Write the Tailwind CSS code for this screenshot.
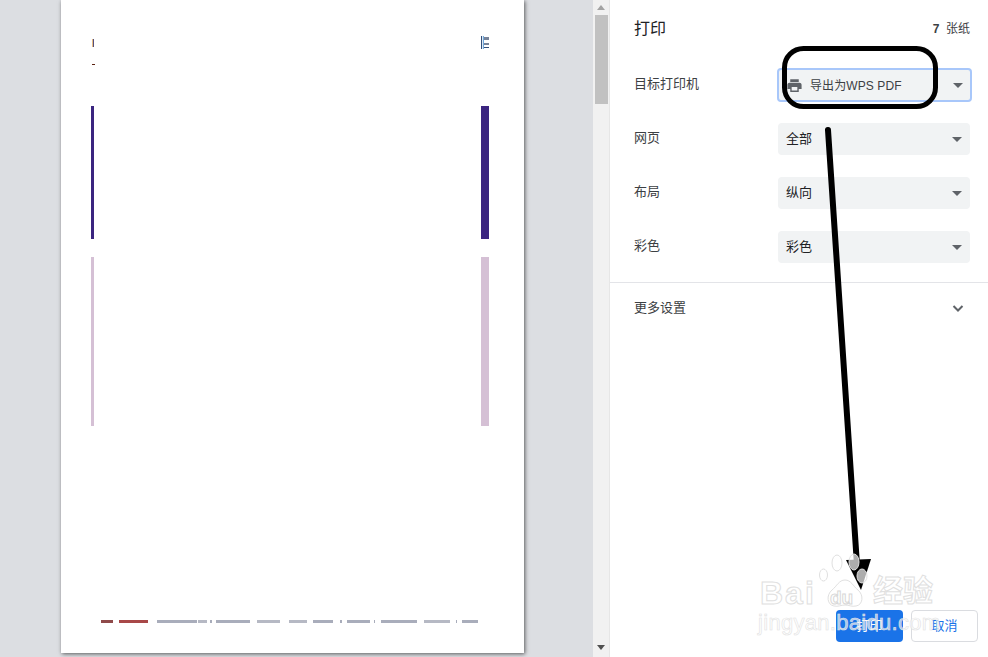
<!DOCTYPE html>
<html lang="zh-CN">
<head>
    <meta charset="UTF-8">
    <title>打印</title>
    <script src="https://cdn.jsdelivr.net/npm/@tailwindcss/browser@4"></script>
</head>
<body class="overflow-hidden bg-white font-['Liberation_Sans','Noto_Sans_CJK_SC',sans-serif]">
    <div class="relative flex h-[657px] w-[988px] overflow-hidden">
        <!-- Preview area -->
        <div class="h-full w-[593px] shrink-0 bg-[#dcdee2] pl-[61px]">
            <div class="flex h-[653px] w-[463px] flex-col bg-white pl-[30px] pr-[35px] shadow-[1px_1px_4px_rgba(0,0,0,0.6)]">
                <!-- cut off header -->
                <div class="flex h-[106px] justify-between pt-[36px]">
                    <div class="flex w-[4px] flex-col pt-[3px]">
                        <div class="ml-[1px] flex h-[8px] w-[2px]">
                            <div class="w-[1px] bg-[#e8bd82]"></div>
                            <div class="w-[1px] bg-[#55507f]"></div>
                        </div>
                        <div class="ml-[1px] mt-[17px] h-[1px] w-[3px] bg-[#5a2010]"></div>
                    </div>
                    <div class="flex h-[13px] w-[8px]">
                        <div class="w-[1px] bg-[#34507a]"></div>
                        <div class="w-[1px] bg-[#dfe8f2]"></div>
                        <div class="w-[1px] bg-[#6fa8dc]"></div>
                        <div class="flex flex-1 flex-col justify-between py-[1px]">
                            <div class="h-[3px] bg-[#77849a]"></div>
                            <div class="h-[2px] bg-[#77849a]"></div>
                            <div class="h-[1px] bg-[#34507a]"></div>
                        </div>
                    </div>
                </div>
                <div class="flex h-[133px] justify-between">
                    <div class="w-[3px] bg-[#3b2580]"></div>
                    <div class="w-[8px] bg-[#3b2580]"></div>
                </div>
                <div class="mt-[18px] flex h-[169px] justify-between">
                    <div class="w-[3px] bg-[#d5c0d5]"></div>
                    <div class="w-[8px] bg-[#d5c0d5]"></div>
                </div>
                <!-- cut off footer line -->
                <div class="ml-[10px] mt-[194px] flex h-[3px] w-[377px] blur-[0.5px]">
                    <div class="w-[12px] bg-[#8f4a4a]"></div>
                    <div class="ml-[6px] w-[29px] bg-[#a84848]"></div>
                    <div class="ml-[9px] w-[40px] bg-[#a9adbb]"></div>
                    <div class="ml-[1px] w-[9px] bg-[#b6b9c4]"></div>
                    <div class="ml-[3px] w-[2px] bg-[#a9adbb]"></div>
                    <div class="ml-[4px] w-[34px] bg-[#a9adbb]"></div>
                    <div class="ml-[7px] w-[23px] bg-[#b6b9c4]"></div>
                    <div class="ml-[9px] w-[18px] bg-[#b6b9c4]"></div>
                    <div class="ml-[6px] w-[20px] bg-[#a9adbb]"></div>
                    <div class="ml-[7px] w-[2px] bg-[#a9adbb]"></div>
                    <div class="ml-[5px] w-[23px] bg-[#a9adbb]"></div>
                    <div class="ml-[4px] w-[1px] bg-[#a9adbb]"></div>
                    <div class="ml-[6px] w-[36px] bg-[#a9adbb]"></div>
                    <div class="ml-[7px] w-[26px] bg-[#b6b9c4]"></div>
                    <div class="ml-[6px] w-[1px] bg-[#a9adbb]"></div>
                    <div class="ml-[5px] w-[16px] bg-[#a9adbb]"></div>
                </div>
            </div>
        </div>

        <!-- Scrollbar -->
        <div class="flex h-full w-[17px] shrink-0 flex-col items-center border-r border-[#e6e6e6] bg-[#f1f1f1]">
            <div class="mt-[5px] h-0 w-0 border-x-[4px] border-b-[5px] border-x-transparent border-b-[#a3a3a3]"></div>
            <div class="mt-[5px] h-[89px] w-[13px] bg-[#c1c1c1]"></div>
            <div class="mt-[541px] h-0 w-0 border-x-[4px] border-t-[5px] border-x-transparent border-t-[#505050]"></div>
        </div>

        <!-- Settings panel -->
        <div class="relative h-full flex-1 bg-white text-[13px] text-[#3c4043]">
            <div class="flex h-[58px] items-center justify-between pl-[24px] pr-[18px]">
                <span class="text-[16px] text-[#202124]">打印</span>
                <span class="text-[12px] text-[#3c4043]"><span class="font-bold">7</span>&nbsp;&nbsp;张纸</span>
            </div>
            <div class="flex h-[54px] items-center justify-between pl-[24px] pr-[18px]">
                <span class="pb-[2px]">目标打印机</span>
                <div class="-mr-[2px] flex h-[34px] w-[195px] items-center rounded-[4px] border-2 border-[#a8c7fa] bg-[#f1f3f4] px-[7px]">
                    <svg class="h-[17px] w-[17px] shrink-0" viewBox="0 0 24 24" fill="#5f6368"><path d="M19 8H5c-1.66 0-3 1.34-3 3v6h4v4h12v-4h4v-6c0-1.66-1.34-3-3-3zm-3 11H8v-5h8v5zM18 3H6v4h12V3z"/></svg>
                    <span class="ml-[7px] flex-1 pt-[1px] text-[12px] tracking-[0.1px] text-[#3c4043]">导出为WPS PDF</span>
                    <div class="h-0 w-0 border-x-[5px] border-t-[5px] border-x-transparent border-t-[#5f6368]"></div>
                </div>
            </div>
            <div class="flex h-[54px] items-center justify-between pl-[24px] pr-[18px]">
                <span class="pb-[2px]">网页</span>
                <div class="flex h-[32px] w-[192px] items-center justify-between rounded-[4px] bg-[#f1f3f4] px-[8px] text-[#202124]">
                    <span>全部</span>
                    <div class="h-0 w-0 border-x-[5px] border-t-[5px] border-x-transparent border-t-[#5f6368]"></div>
                </div>
            </div>
            <div class="flex h-[54px] items-center justify-between pl-[24px] pr-[18px]">
                <span class="pb-[2px]">布局</span>
                <div class="flex h-[32px] w-[192px] items-center justify-between rounded-[4px] bg-[#f1f3f4] px-[8px] text-[#202124]">
                    <span>纵向</span>
                    <div class="h-0 w-0 border-x-[5px] border-t-[5px] border-x-transparent border-t-[#5f6368]"></div>
                </div>
            </div>
            <div class="flex h-[54px] items-center justify-between pl-[24px] pr-[18px]">
                <span class="pb-[2px]">彩色</span>
                <div class="flex h-[32px] w-[192px] items-center justify-between rounded-[4px] bg-[#f1f3f4] px-[8px] text-[#202124]">
                    <span>彩色</span>
                    <div class="h-0 w-0 border-x-[5px] border-t-[5px] border-x-transparent border-t-[#5f6368]"></div>
                </div>
            </div>
            <div class="mt-[8px] flex h-[51px] items-center justify-between border-t border-[#e3e4e8] pl-[24px] pr-[24px]">
                <span>更多设置</span>
                <svg class="h-[12px] w-[12px]" viewBox="0 0 12 12" fill="none" stroke="#5f6368" stroke-width="2"><path d="M1.5 4 6 8.5 10.5 4"/></svg>
            </div>
            <!-- Action buttons -->
            <div class="absolute bottom-[15px] right-[10px] flex gap-[8px]">
                <button class="h-[32px] w-[67px] rounded-[4px] bg-[#1a73e8] text-[13px] text-white">打印</button>
                <button class="h-[32px] w-[67px] rounded-[4px] border border-[#dadce0] bg-white text-[13px] text-[#1a73e8]">取消</button>
            </div>
        </div>

        <!-- Hand-drawn annotation -->
        <svg class="pointer-events-none absolute left-0 top-0" width="988" height="657" viewBox="0 0 988 657">
            <rect x="784.5" y="48.5" width="151" height="58" rx="19" fill="none" stroke="#000" stroke-width="5"/>
            <path d="M828 130 857 565" stroke="#000" stroke-width="6" stroke-linecap="round"/>
            <path d="M846 560 871 559 861 590Z" fill="#000"/>
        </svg>

        <!-- Baidu watermark -->
        <div class="pointer-events-none absolute left-[757px] top-[551px] h-[100px] w-[231px]">
            <svg class="absolute left-[61px] top-[1px]" width="52" height="56" viewBox="0 0 52 56" fill="rgba(255,255,255,0.68)" stroke="#e0e0e0" stroke-width="1">
                <ellipse cx="5.5" cy="23" rx="4" ry="6"/>
                <ellipse cx="19" cy="11" rx="5" ry="8"/>
                <ellipse cx="36" cy="10" rx="5" ry="8"/>
                <ellipse cx="44" cy="24" rx="5" ry="7"/>
                <path d="M27 28c-6 0-8 6-13 10-6 5-5 15 2 16 4 1 7-1 11-1s7 2 11 1c7-1 8-11 2-16-5-4-7-10-13-10z"/>
            </svg>
            <div class="absolute left-[3px] top-[26px] text-[32px] font-bold leading-none tracking-[2px] text-white/60 [-webkit-text-stroke:1px_#e0e0e0]">Bai</div>
            <div class="absolute left-[73px] top-[37px] text-[19px] font-bold leading-none text-white/60 [-webkit-text-stroke:1px_#d8d8d8]">du</div>
            <div class="absolute left-[116px] top-[25px] text-[30px] font-bold leading-none text-white/60 [-webkit-text-stroke:1px_#e0e0e0]">经验</div>
            <div class="absolute left-[1px] top-[61px] text-[22px] leading-none tracking-[0.3px] text-white/60 [-webkit-text-stroke:0.6px_#e2e2e2]">jingyan.baidu.com</div>
        </div>
    </div>
</body>
</html>
